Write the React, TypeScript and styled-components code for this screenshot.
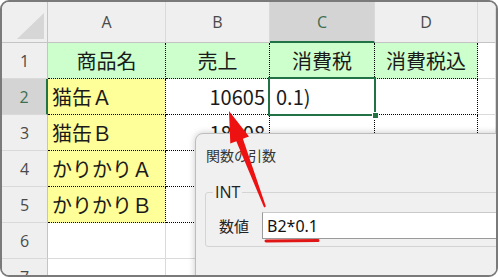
import React from "react";
import styled, { createGlobalStyle, css } from "styled-components";

const JP = `"Noto Sans CJK JP", "Noto Sans", sans-serif`;
const UI = `"Open Sans", "Noto Sans", sans-serif`;
const GREEN = "#217346";

const GlobalStyle = createGlobalStyle`
  body {
    margin: 0;
    background: #fff;
  }
`;

const Frame = styled.div`
  position: relative;
  width: 498px;
  height: 277px;
  box-sizing: border-box;
  border: 2px solid #7a7a7a;
  border-radius: 9px;
  overflow: hidden;
  background: #fff;
`;

const Sheet = styled.div`
  display: grid;
  grid-template-columns: 46px 118px 104px 105px 103px 1fr;
  grid-template-rows: 41px;
  grid-auto-rows: 36px;
`;

const headerBase = css`
  box-sizing: border-box;
  background: #efefef;
  display: flex;
  align-items: center;
  justify-content: center;
  font-family: ${UI};
  color: #4a4a4a;
`;

const Corner = styled.div`
  ${headerBase};
  position: relative;
  border-right: 1px solid #c4c4c4;
  border-bottom: 1px solid #c4c4c4;
  &::after {
    content: "";
    position: absolute;
    left: 15px;
    top: 11px;
    width: 27px;
    height: 26px;
    background: #d6d6d6;
    clip-path: polygon(100% 0, 100% 100%, 0 100%);
  }
`;

const ColHeader = styled.div<{ $selected?: boolean }>`
  ${headerBase};
  font-size: 16px;
  border-right: 1px solid #d9d9d9;
  border-bottom: 1px solid #c4c4c4;
  ${(p) =>
    p.$selected &&
    css`
      background: #d4d4d4;
      color: #3c6e50;
      border-bottom: 2px solid ${GREEN};
    `}
`;

const RowHeader = styled.div<{ $selected?: boolean }>`
  ${headerBase};
  font-size: 16px;
  border-right: 1px solid #c4c4c4;
  border-bottom: 1px solid #d9d9d9;
  ${(p) =>
    p.$selected &&
    css`
      background: #d4d4d4;
      color: #3c6e50;
      border-right: 2px solid ${GREEN};
    `}
`;

type Fill = "green" | "yellow" | "none";
const fills: Record<Fill, string> = {
  green: "#ccffcc",
  yellow: "#ffff99",
  none: "transparent",
};

const Cell = styled.div<{
  $fill: Fill;
  $align: "left" | "center" | "right";
  $dotted: boolean;
  $active?: boolean;
}>`
  position: relative;
  box-sizing: border-box;
  display: flex;
  align-items: center;
  padding: 0 4px;
  white-space: nowrap;
  font-family: ${JP};
  font-size: 20px;
  color: #1a1a1a;
  background: ${(p) => fills[p.$fill]};
  justify-content: ${(p) =>
    p.$align === "center" ? "center" : p.$align === "right" ? "flex-end" : "flex-start"};
  border-right: ${(p) => (p.$dotted ? "1px dotted #000" : "1px solid #dadada")};
  border-bottom: ${(p) => (p.$dotted ? "1px dotted #000" : "1px solid #dadada")};
  ${(p) =>
    p.$active &&
    css`
      padding-left: 6px;
      &::before {
        content: "";
        position: absolute;
        left: -2px;
        top: -2px;
        right: -2px;
        bottom: -2px;
        border: 2px solid ${GREEN};
        z-index: 2;
      }
      &::after {
        content: "";
        position: absolute;
        right: -5px;
        bottom: -5px;
        width: 5px;
        height: 5px;
        background: ${GREEN};
        border: 1px solid #fff;
        z-index: 3;
      }
    `}
`;

const Dialog = styled.div`
  position: absolute;
  left: 193px;
  top: 131px;
  right: -12px;
  bottom: -12px;
  box-sizing: border-box;
  background: #f0f0f0;
  border: 1px solid #bdbdbd;
  border-radius: 8px;
  box-shadow: 0 0 7px rgba(0, 0, 0, 0.22);
  padding: 11px 0 0 10px;
  font-family: ${JP};
`;

const DialogTitle = styled.div`
  font-size: 14px;
  line-height: 20px;
  color: #333;
`;

const GroupBox = styled.fieldset`
  margin: 17px 0 0 -1px;
  padding: 0;
  border: 1px solid #d4d4d4;
  border-radius: 3px;
  min-width: 0;
`;

const Legend = styled.legend`
  margin-left: 7px;
  padding: 0 2px;
  font-family: ${UI};
  font-size: 16px;
  line-height: 20px;
  color: #222;
`;

const ArgRow = styled.div`
  display: flex;
  align-items: center;
  gap: 13px;
  padding: 10px 0 7px 13px;
`;

const ArgLabel = styled.span`
  font-size: 15px;
  color: #222;
`;

const ArgInput = styled.div`
  flex: 1;
  height: 27px;
  box-sizing: border-box;
  display: flex;
  align-items: center;
  padding-left: 4px;
  background: #fff;
  border: 1px solid #9a9a9a;
  border-top-color: #c9c9c9;
  font-family: "Noto Sans", sans-serif;
  font-size: 16px;
  color: #111;
`;

const Overlay = styled.svg`
  position: absolute;
  left: -2px;
  top: -2px;
  width: 498px;
  height: 277px;
  pointer-events: none;
  z-index: 5;
`;

type CellData = {
  t?: string;
  fill?: Fill;
  align?: "left" | "center" | "right";
  active?: boolean;
};

const rows: { n: number; dotted: boolean; cells: CellData[] }[] = [
  {
    n: 1,
    dotted: true,
    cells: [
      { t: "商品名", fill: "green", align: "center" },
      { t: "売上", fill: "green", align: "center" },
      { t: "消費税", fill: "green", align: "center" },
      { t: "消費税込", fill: "green", align: "center" },
    ],
  },
  {
    n: 2,
    dotted: true,
    cells: [{ t: "猫缶Ａ", fill: "yellow" }, { t: "10605", align: "right" }, { t: "0.1)", active: true }, {}],
  },
  {
    n: 3,
    dotted: true,
    cells: [{ t: "猫缶Ｂ", fill: "yellow" }, { t: "18908", align: "right" }, {}, {}],
  },
  { n: 4, dotted: true, cells: [{ t: "かりかりＡ", fill: "yellow" }, {}, {}, {}] },
  { n: 5, dotted: true, cells: [{ t: "かりかりＢ", fill: "yellow" }, {}, {}, {}] },
  { n: 6, dotted: false, cells: [{}, {}, {}, {}] },
  { n: 7, dotted: false, cells: [{}, {}, {}, {}] },
];

const columns = ["A", "B", "C", "D", ""];

export default function App() {
  return (
    <>
      <GlobalStyle />
      <Frame>
        <Sheet>
          <Corner />
          {columns.map((c) => (
            <ColHeader key={c || "E"} $selected={c === "C"}>
              {c}
            </ColHeader>
          ))}
          {rows.map((r) => (
            <React.Fragment key={r.n}>
              <RowHeader $selected={r.n === 2}>{r.n}</RowHeader>
              {r.cells.map((c, i) => (
                <Cell
                  key={i}
                  $fill={c.fill ?? "none"}
                  $align={c.align ?? "left"}
                  $dotted={r.dotted}
                  $active={c.active}
                >
                  {c.t}
                </Cell>
              ))}
              <Cell $fill="none" $align="left" $dotted={false} />
            </React.Fragment>
          ))}
        </Sheet>

        <Dialog>
          <DialogTitle>関数の引数</DialogTitle>
          <GroupBox>
            <Legend>INT</Legend>
            <ArgRow>
              <ArgLabel>数値</ArgLabel>
              <ArgInput>B2*0.1</ArgInput>
            </ArgRow>
          </GroupBox>
        </Dialog>

        <Overlay viewBox="0 0 498 277">
          <polygon
            fill="#ee1111"
            points="229,111 249,136.5 242.9,138.8 265.9,206.6 264.1,207.4 236.3,141.2 230.3,143.5"
          />
          <path d="M266 241 L318 240.5" stroke="#e01515" strokeWidth="3" strokeLinecap="round" fill="none" />
        </Overlay>
      </Frame>
    </>
  );
}
